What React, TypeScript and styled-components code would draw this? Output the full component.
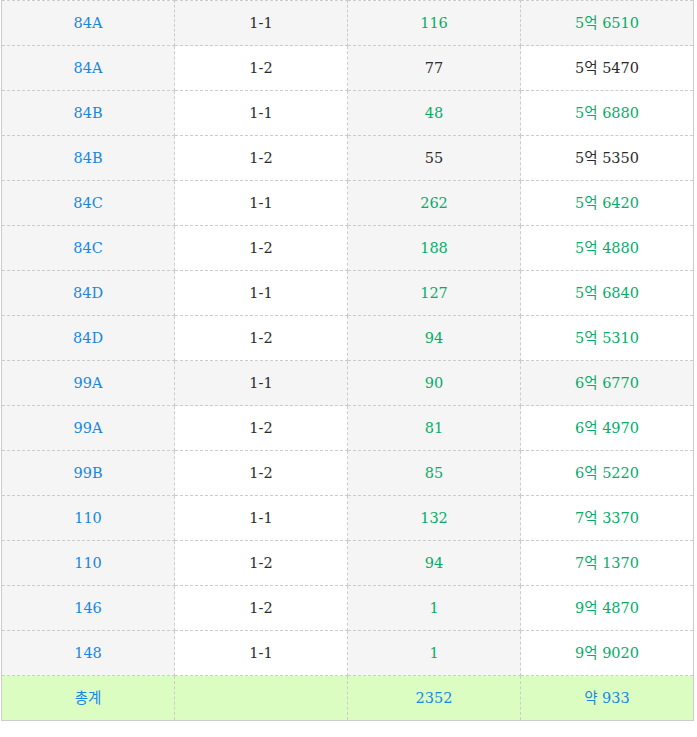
import React from "react";
import styled, { createGlobalStyle } from "styled-components";

const GlobalStyle = createGlobalStyle`
  body {
    margin: 0;
    background: #fff;
    font-family: "DejaVu Serif", "Noto Sans CJK KR", serif;
  }
`;

const Wrapper = styled.div`
  padding: 0 0 0 1px;
  width: 693px;
`;

const Table = styled.table`
  width: 693px;
  border-collapse: collapse;
  table-layout: fixed;
  border: 1px solid #cccccc;
  border-top: none;
`;

type Tone = "blue" | "green" | "dark";

const toneColor: Record<Tone, string> = {
  blue: "#1787e3",
  green: "#05ad67",
  dark: "#2b2b2b",
};

const Cell = styled.td<{ $gray?: boolean; $tone: Tone; $total?: boolean }>`
  height: 42px;
  padding: 2px 0 0;
  text-align: center;
  vertical-align: middle;
  font-size: 14.5px;
  line-height: 1.2;
  border: 1px dashed #cccccc;
  color: ${(p) => toneColor[p.$tone]};
  background: ${(p) => (p.$total ? "#dbfdc2" : p.$gray ? "#f5f5f5" : "#ffffff")};
`;

type Row = {
  type: string;
  room: string;
  count: string;
  price: string;
  countDark?: boolean;
  priceDark?: boolean;
  fullGray?: boolean;
};

const rows: Row[] = [
  { type: "84A", room: "1-1", count: "116", price: "5억 6510", fullGray: true },
  { type: "84A", room: "1-2", count: "77", price: "5억 5470", countDark: true, priceDark: true },
  { type: "84B", room: "1-1", count: "48", price: "5억 6880" },
  { type: "84B", room: "1-2", count: "55", price: "5억 5350", countDark: true, priceDark: true },
  { type: "84C", room: "1-1", count: "262", price: "5억 6420" },
  { type: "84C", room: "1-2", count: "188", price: "5억 4880" },
  { type: "84D", room: "1-1", count: "127", price: "5억 6840" },
  { type: "84D", room: "1-2", count: "94", price: "5억 5310" },
  { type: "99A", room: "1-1", count: "90", price: "6억 6770", fullGray: true },
  { type: "99A", room: "1-2", count: "81", price: "6억 4970" },
  { type: "99B", room: "1-2", count: "85", price: "6억 5220" },
  { type: "110", room: "1-1", count: "132", price: "7억 3370" },
  { type: "110", room: "1-2", count: "94", price: "7억 1370" },
  { type: "146", room: "1-2", count: "1", price: "9억 4870" },
  { type: "148", room: "1-1", count: "1", price: "9억 9020" },
];

export default function App() {
  return (
    <Wrapper>
      <GlobalStyle />
      <Table>
        <tbody>
          {rows.map((r, i) => (
            <tr key={i}>
              <Cell $gray $tone="blue">{r.type}</Cell>
              <Cell $gray={r.fullGray} $tone="dark">{r.room}</Cell>
              <Cell $gray $tone={r.countDark ? "dark" : "green"}>{r.count}</Cell>
              <Cell $gray={r.fullGray} $tone={r.priceDark ? "dark" : "green"}>{r.price}</Cell>
            </tr>
          ))}
          <tr>
            <Cell $total $tone="blue">총계</Cell>
            <Cell $total $tone="blue"></Cell>
            <Cell $total $tone="blue">2352</Cell>
            <Cell $total $tone="blue">약 933</Cell>
          </tr>
        </tbody>
      </Table>
    </Wrapper>
  );
}
